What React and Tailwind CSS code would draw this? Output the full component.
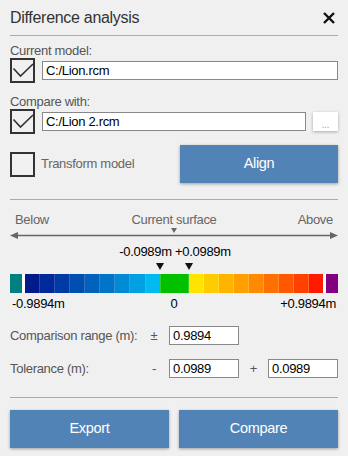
import React from "react";

const blues = ["#001a8c", "#00299a", "#003ba5", "#004eb0", "#0062bc", "#0075c8", "#0089d4", "#00a0e2", "#00baf0"];
const warms = ["#ffe400", "#ffcc00", "#ffb400", "#ff9f00", "#ff8900", "#ff7000", "#ff5800", "#ff4000", "#ff1a00"];

const CheckBox = ({ checked }) => (
  <div className="w-[25px] h-[25px] border-2 border-[#333] shrink-0 relative">
    {checked && (
      <svg width="25" height="25" viewBox="0 0 25 25" className="absolute -left-[2px] -top-[2px]">
        <polyline points="3.5,10.5 10.5,18 23,6" fill="none" stroke="#333" strokeWidth="1.6" />
      </svg>
    )}
  </div>
);

const Field = ({ value, className = "" }) => (
  <div className={`h-[19px] bg-white border border-[#888] pl-[3px] text-[13px] leading-[17px] text-black ${className}`}>
    {value}
  </div>
);

const BlueButton = ({ label, className = "" }) => (
  <button className={`h-[38px] bg-[#5283b6] text-white text-[14.5px] shadow-[0_1px_3px_rgba(0,0,0,0.35)] ${className}`}>
    {label}
  </button>
);

export default function App() {
  return (
    <div className="w-[348px] h-[456px] bg-[#f0f0f0] px-[10px] font-['Liberation_Sans',Arial,sans-serif] tracking-[-0.3px] overflow-hidden">
      {/* header */}
      <div className="flex items-center justify-between h-[36px] border-b border-[#aaa]">
        <span className="text-[16px] text-[#333]">Difference analysis</span>
        <svg width="12" height="12" viewBox="0 0 12 12" className="mr-[3px]">
          <path d="M1 1 L11 11 M11 1 L1 11" stroke="#111" strokeWidth="2.4" />
        </svg>
      </div>

      {/* models */}
      <div className="mt-[7px] text-[13px] leading-[15px] text-[#555]">Current model:</div>
      <div className="flex items-center gap-[7px] h-[25px]">
        <CheckBox checked />
        <Field value="C:/Lion.rcm" className="flex-1" />
      </div>

      <div className="mt-[11px] text-[13px] leading-[15px] text-[#555]">Compare with:</div>
      <div className="flex items-center gap-[7px] h-[25px]">
        <CheckBox checked />
        <Field value="C:/Lion 2.rcm" className="flex-1" />
        <div className="w-[25px] h-[19px] bg-white shadow-[0_1px_3px_rgba(0,0,0,0.3)] flex items-end justify-center text-[10px] leading-[12px] text-[#d09a4a]">
          ...
        </div>
      </div>

      <div className="mt-[11px] flex items-center h-[38px]">
        <CheckBox />
        <span className="ml-[6px] text-[13px] text-[#666]">Transform model</span>
        <BlueButton label="Align" className="ml-auto w-[158px]" />
      </div>

      <div className="mt-[16px] border-t border-[#aaa]" />

      {/* scale */}
      <div className="mt-[12px] grid grid-cols-3 px-[5px] text-[13px] leading-[15px] text-[#666]">
        <span>Below</span>
        <span className="text-center">Current surface</span>
        <span className="text-right">Above</span>
      </div>
      <svg width="328" height="14" viewBox="0 0 328 14" className="block">
        <polygon points="161,1 167,1 164,6" fill="#666" />
        <line x1="4" y1="8.5" x2="324" y2="8.5" stroke="#666" strokeWidth="1.5" />
        <polygon points="0,8.5 8,5 8,12" fill="#666" />
        <polygon points="328,8.5 320,5 320,12" fill="#666" />
      </svg>

      <div className="mt-[3px] text-center text-[13px] leading-[15px] text-black pl-[2px]">-0.0989m +0.0989m</div>
      <svg width="328" height="7" viewBox="0 0 328 7" className="block mt-[4px]">
        <polygon points="146,0 154,0 150,7" fill="#111" />
        <polygon points="175,0 183,0 179,7" fill="#111" />
      </svg>

      <div className="mt-[4px] flex h-[19px]">
        <div className="w-[12px] bg-[#008080]" />
        <div className="w-[3px] bg-white" />
        {blues.map((c, i) => (
          <div key={c} className={`flex-1 ${i < blues.length - 1 ? "border-r border-white/20" : ""}`} style={{ backgroundColor: c }} />
        ))}
        <div className="w-[29px] bg-[#00c000] border-x border-white/20" />
        {warms.map((c, i) => (
          <div key={c} className={`flex-1 ${i < warms.length - 1 ? "border-r border-white/20" : ""}`} style={{ backgroundColor: c }} />
        ))}
        <div className="w-[3px] bg-white" />
        <div className="w-[12px] bg-[#800080]" />
      </div>
      <div className="mt-[3px] grid grid-cols-3 px-[2px] text-[13px] leading-[15px] text-black">
        <span>-0.9894m</span>
        <span className="text-center">0</span>
        <span className="text-right">+0.9894m</span>
      </div>

      {/* ranges */}
      <div className="mt-[15px] flex items-center h-[19px] text-[13px] text-[#555]">
        <span className="w-[136px]">Comparison range (m):</span>
        <span className="w-[16px] text-center">±</span>
        <Field value="0.9894" className="ml-[7px] w-[70px]" />
      </div>
      <div className="mt-[14px] flex items-center h-[19px] text-[13px] text-[#555]">
        <span className="w-[136px]">Tolerance (m):</span>
        <span className="w-[16px] text-center">-</span>
        <Field value="0.0989" className="ml-[7px] w-[70px]" />
        <span className="w-[29px] text-center">+</span>
        <Field value="0.0989" className="w-[70px]" />
      </div>

      <div className="mt-[19px] border-t border-[#aaa]" />

      <div className="mt-[12px] flex gap-[10px]">
        <BlueButton label="Export" className="flex-1" />
        <BlueButton label="Compare" className="flex-1" />
      </div>
    </div>
  );
}
